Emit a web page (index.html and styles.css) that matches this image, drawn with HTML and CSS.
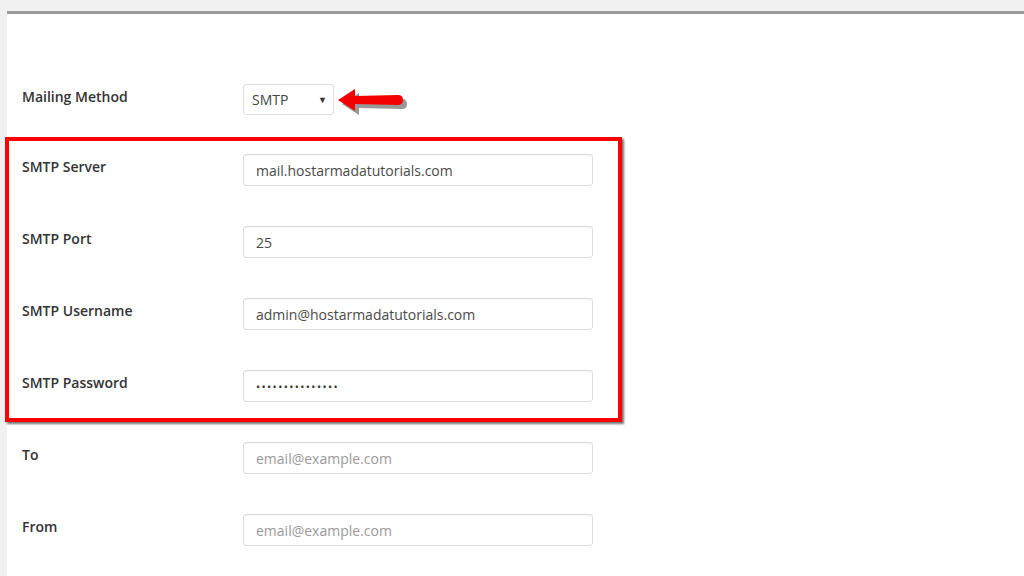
FILE: index.html
```html
<!DOCTYPE html>
<html>

<head>
    <meta charset="utf-8">
    <title>Mail settings</title>
    <link rel="stylesheet" href="styles.css">
</head>

<body>

    <section class="panel">
        <form class="mailform">

            <div class="row">
                <label>Mailing Method</label>
                <div class="pick">
                    <select class="method">
                        <option>SMTP</option>
                        <option>PHP Mail</option>
                    </select>
                </div>
            </div>

            <div class="row">
                <label>SMTP Server</label>
                <input class="field" type="text" value="mail.hostarmadatutorials.com">
            </div>

            <div class="row">
                <label>SMTP Port</label>
                <input class="field" type="text" value="25">
            </div>

            <div class="row">
                <label>SMTP Username</label>
                <input class="field" type="text" value="admin@hostarmadatutorials.com">
            </div>

            <div class="row">
                <label>SMTP Password</label>
                <input class="field" type="password" value="passwordpasswor">
            </div>

            <div class="row">
                <label>To</label>
                <input class="field" type="text" placeholder="email@example.com">
            </div>

            <div class="row">
                <label>From</label>
                <input class="field" type="text" placeholder="email@example.com">
            </div>

            <!-- annotations on top of the form -->
            <div class="mark"></div>
            <svg class="arrow" width="72" height="28" viewBox="0 0 72 28">
                <path d="M3 14 L20 3 L20 10 L63 9 Q68 9 68 14 Q68 19 63 19 L20 18 L20 25 Z" fill="#444" opacity="0.55" transform="translate(2 2)"/>
                <path d="M1 12 L18 1 L18 8 L61 7 Q66 7 66 12 Q66 17 61 17 L18 16 L18 23 Z" fill="#f50000"/>
            </svg>

        </form>
    </section>

</body>

</html>
```

FILE: styles.css
```css
/* General styles */

html {
    background-color: #f1f1f1;
    height: 100%;
    font-family: "Open Sans", "Liberation Sans", sans-serif;
}

body {
    height: inherit;
    margin: 0;
    overflow: hidden;
}

* {
    box-sizing: border-box;
}

/* Panel */

.panel {
    margin: 11px 0 0 7px;
    height: 100%;
    background-color: #fff;
    border-top: 3px solid #999;
    padding: 70px 0 0 15px;
}

.mailform {
    position: relative;
}

.row {
    display: grid;
    grid-template-columns: 221px 350px;
    align-items: start;
    margin-bottom: 40px;
}

.row label {
    font-size: 14px;
    font-weight: 600;
    color: #333;
    line-height: 18px;
    padding-top: 4px;
}

.field {
    height: 32px;
    width: 350px;
    border: 1px solid #ddd;
    border-radius: 3px;
    padding: 0 12px;
    font-family: inherit;
    font-size: 14px;
    color: #4a4a4a;
    box-shadow: inset 0 1px 1px rgba(0, 0, 0, 0.04);
}

.field::placeholder {
    color: #999;
}

.field[type="password"] {
    font-size: 11px;
    letter-spacing: 1.4px;
    color: #333;
}

/* select */

.pick {
    position: relative;
    width: 91px;
}

.method {
    appearance: none;
    -webkit-appearance: none;
    width: 91px;
    height: 31px;
    margin-bottom: -1px;
    border: 1px solid #ddd;
    border-radius: 3px;
    background-color: #fff;
    padding: 0 8px;
    font-family: inherit;
    font-size: 14px;
    color: #444;
}

.pick::after {
    content: "\25BC";
    position: absolute;
    right: 7px;
    top: 9px;
    font-size: 9px;
    color: #333;
    pointer-events: none;
}

/* red annotation */

.mark {
    position: absolute;
    left: -17px;
    top: 53px;
    width: 617px;
    height: 285px;
    border: 4px solid #f00;
    box-shadow: 2px 2px 2px rgba(0, 0, 0, 0.55);
    pointer-events: none;
}

.arrow {
    position: absolute;
    left: 315px;
    top: 4px;
}
```
